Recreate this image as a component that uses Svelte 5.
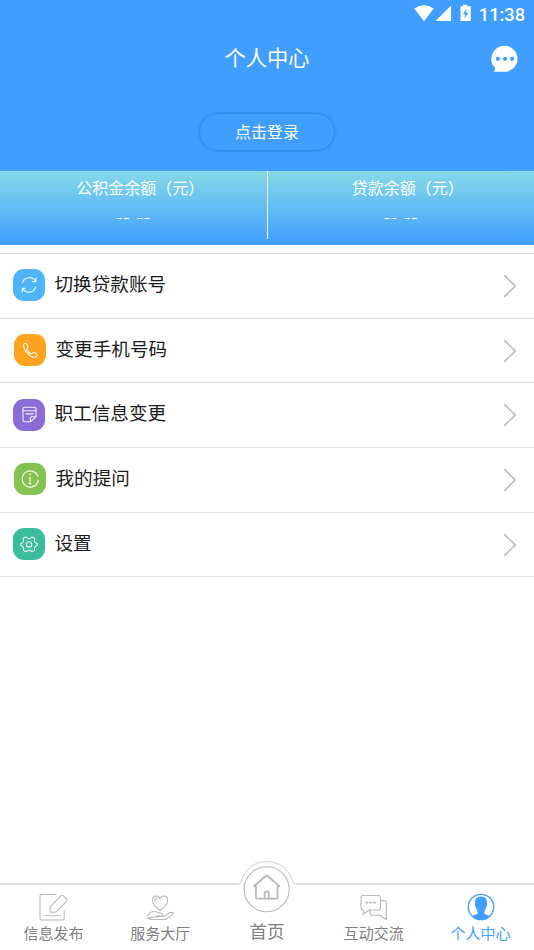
<script lang="ts">
    type MenuItem = { icon: string; label: string; color: string; offset: number };

    const stats = [
        { label: '公积金余额（元）', value: '-- --' },
        { label: '贷款余额（元）', value: '-- --' }
    ];

    const menu: MenuItem[] = [
        { icon: 'refresh', label: '切换贷款账号', color: '#4fb5fb', offset: 13 },
        { icon: 'phone', label: '变更手机号码', color: '#ffa320', offset: 14 },
        { icon: 'note', label: '职工信息变更', color: '#8b6cd6', offset: 13 },
        { icon: 'info', label: '我的提问', color: '#84c251', offset: 14 },
        { icon: 'gear', label: '设置', color: '#3bbd9c', offset: 13 }
    ];

    const tabs = [
        { id: 'news', label: '信息发布' },
        { id: 'service', label: '服务大厅' },
        { id: 'home', label: '首页' },
        { id: 'chat', label: '互动交流' },
        { id: 'mine', label: '个人中心' }
    ];

    let active = $state('mine');
</script>

<div class="page">
    <header class="hero">
        <div class="status-bar">
            <svg class="signals" width="58" height="18" viewBox="0 0 58 18">
                <path d="M0.3 4.6Q10-2.2 19.7 4.6L10 17.3Z" />
                <path d="M37 1.5V17H21.5Z" />
                <path d="M46.5 2.3H49V0.8H53.2V2.3H56.8V17H46.5Z" />
                <path class="bolt" d="M53 4.5L48.7 10.2H51.3L50 15L54.4 8.8H51.9Z" />
            </svg>
            <span class="clock">11:38</span>
        </div>

        <div class="title-bar">
            <h1>个人中心</h1>
            <button class="message" aria-label="消息">
                <svg width="28" height="28" viewBox="0 0 28 28">
                    <path d="M14 0.8A13 13 0 1 1 13 26.8H2.3C4 25.5 4.3 24.5 3.9 22.6A13 13 0 0 1 14 0.8Z" />
                    <circle class="dot" cx="6.9" cy="13.8" r="2.1" />
                    <circle class="dot" cx="14" cy="13.8" r="2.1" />
                    <circle class="dot" cx="21.1" cy="13.8" r="2.1" />
                </svg>
            </button>
        </div>

        <button class="login">点击登录</button>
    </header>

    <section class="stats">
        {#each stats as stat}
            <div class="stat">
                <span class="stat-label">{stat.label}</span>
                <span class="stat-value">{stat.value}</span>
            </div>
        {/each}
    </section>

    <ul class="menu">
        {#each menu as item}
            <li>
                <span class="tile" style="background-color: {item.color}; margin-left: {item.offset}px">
                    <svg width="32" height="32" viewBox="0 0 32 32">
                        {#if item.icon === 'refresh'}
                            <path d="M9.4 14.2A7 7 0 0 1 22.3 12.2M22.9 8.6V12.6H19.2M22.8 17.6A7 7 0 0 1 9.8 19.6M9.3 23.2V19.2H12.8" />
                        {:else if item.icon === 'phone'}
                            <path d="M9.4 11.2C9.4 9.8 11 9 12 9.3C13 9.8 14.1 12 14 13C13.9 14 12.5 14 12.7 15C13.2 17 15.2 19 17.2 19.8C18.2 20.1 18.6 18.7 19.6 18.5C20.8 18.4 23 20 23.3 21C23.5 22.1 22 23.4 20.7 23.3C15.5 22.8 9.3 16.5 9.4 11.2Z" />
                        {:else if item.icon === 'note'}
                            <path d="M17.4 22.8H11.5Q10 22.8 10 21.3V9.6Q10 8.3 11.5 8.3H21.5Q23 8.3 23 9.6V17.8ZM17.4 22.8V18.8Q17.4 17.8 18.4 17.8H23M10.5 11.7H22.5M12.6 14.9H20.5" />
                        {:else if item.icon === 'info'}
                            <path d="M24 13.6A8.1 8.1 0 1 0 23.8 19L24.5 17M16 14.3V20.8M14.8 14.3H16M14.5 20.8H17.5" />
                            <circle class="fill" cx="16" cy="11.3" r="0.9" />
                        {:else}
                            <path d="M13 8.9L15 10.6H17L19 8.9L21.6 10.3L21.4 13L22.4 14.6L24.2 15.8V17.2L22.4 18.4L21.4 20L21.6 22.3L19 23.7L17 22.2H15L13 23.7L10.4 22.3L10.6 20L9.6 18.4L7.8 17.2V15.8L9.6 14.6L10.6 13L10.4 10.3Z" />
                            <circle cx="16" cy="16.4" r="2.7" />
                        {/if}
                    </svg>
                </span>
                <span class="menu-label">{item.label}</span>
                <svg class="chevron" width="14" height="24" viewBox="0 0 14 24">
                    <path d="M1.2 1.2L12.2 12L1.2 22.8" />
                </svg>
            </li>
        {/each}
    </ul>

    <nav class="tabs">
        {#each tabs as tab}
            <button
                class="tab"
                class:home={tab.id === 'home'}
                class:active={tab.id === active}
                onclick={() => (active = tab.id)}
            >
                {#if tab.id === 'news'}
                    <svg width="32" height="30" viewBox="0 0 32 30">
                        <path d="M18.7 2.5H4.5Q3 2.5 3 4V26.5Q3 28 4.5 28H25.7Q27.2 28 27.2 26.5V19M7 23.7H23.7" />
                        <path d="M13.1 14.8L24.2 3.6Q25.3 2.9 26.4 3.8L29.5 6.8Q30.7 8 29.5 9.3L18.8 20.1H13.1Z" />
                    </svg>
                {:else if tab.id === 'service'}
                    <svg width="30" height="30" viewBox="0 0 30 30">
                        <path d="M15 18.5C11 15.5 7.5 12 7.5 8.5C7.5 3.5 13.3 2.4 15 6.8C16.8 2.4 22.6 3.5 22.6 8.5C22.6 12 19 15.5 15 18.5ZM10 9Q10 6 12.3 6" />
                        <path d="M2 24C3.5 23.6 4 20 8 19.5C11.5 19 13.5 21.3 16 21.3C18.5 21.4 18.7 24 16.2 24.1H11.5M17.5 24.3C21.2 24 22.7 21.3 25 20.6C27 20.1 28.7 20.8 28.2 21.6C25 24.2 22.7 27.4 19 27.5H7.5Q5.5 27.5 2 26Z" />
                    </svg>
                {:else if tab.id === 'home'}
                    <svg width="60" height="54" viewBox="0 0 60 54">
                        <path class="bump" d="M0 24H1Q3.5 24 5 19A26.6 26.6 0 0 1 55 19Q56.5 24 59 24H60V54H0Z" />
                        <path class="line" d="M0 24H1Q3.5 24 5 19A26.6 26.6 0 0 1 55 19Q56.5 24 59 24H60" />
                        <circle cx="29.7" cy="29.2" r="22.5" />
                        <path class="house" d="M17 26.2L29 15.8Q29.7 15.2 30.4 15.8L42.4 26.2M18.9 24.7V37Q18.9 38.6 20.5 38.6H38.9Q40.5 38.6 40.5 37V24.7M27.6 38.5V33Q27.6 31.3 29.7 31.3Q31.8 31.3 31.8 33V38.5" />
                    </svg>
                {:else if tab.id === 'chat'}
                    <svg width="30" height="30" viewBox="0 0 30 30">
                        <path d="M4 3.5H19.5Q21.5 3.5 21.5 5.5V16Q21.5 18 19.5 18H10.5L4.2 22.3V18Q2 18 2 16V5.5Q2 3.5 4 3.5Z" />
                        <path d="M21.5 8.6H25.8Q27.4 8.6 27.4 10.5V27.7L21 23.2H13Q11 23.2 11 21V18" />
                        <path class="dots" d="M6.8 10.6H8.4M10.9 10.6H12.5M15 10.6H16.6" />
                    </svg>
                {:else}
                    <svg width="30" height="30" viewBox="0 0 30 30">
                        <circle cx="15" cy="15" r="12.7" />
                        <path class="fill" d="M15 4.5C19.3 4.5 21 7.3 21 11C21.6 13.5 20.5 15.6 19.6 16.5C19 19 18 19.5 18.2 21.3C19 22.8 21.5 22.7 23.5 24.1Q20 28 15 28T6.5 24.1C8.5 22.7 11 22.8 11.8 21.3C12 19.5 11 19 10.4 16.5C9.5 15.6 8.4 13.5 9 11C9 7.3 10.7 4.5 15 4.5Z" />
                    </svg>
                {/if}
                <span>{tab.label}</span>
            </button>
        {/each}
    </nav>
</div>

<style>
    :global(body) {
        background: #fff;
    }

    .page {
        display: flex;
        flex-direction: column;
        height: 950px;
        font-family: 'Noto Sans CJK SC', sans-serif;
        overflow: hidden;
    }

    button {
        padding: 0;
        border: none;
        background: none;
        font-family: inherit;
    }

    svg {
        display: block;
        flex: none;
    }

    .hero {
        display: flex;
        flex-direction: column;
        align-items: center;
        height: 171px;
        flex: none;
        background: #409eff;
        color: #fff;
    }

    .status-bar {
        display: flex;
        align-self: stretch;
        justify-content: flex-end;
        align-items: center;
        gap: 7px;
        height: 27px;
        padding-right: 9px;
        box-sizing: border-box;
    }

    .signals {
        fill: #fff;
        margin-bottom: 2px;
    }

    .bolt,
    .dot {
        fill: #409eff;
    }

    .clock {
        padding-top: 1px;
        font: 500 18.2px/27px Roboto, sans-serif;
    }

    .title-bar {
        display: grid;
        grid-template-columns: 1fr auto 1fr;
        align-items: center;
        align-self: stretch;
        height: 62px;
        padding: 0 15px;
    }

    h1 {
        grid-column: 2;
        margin: 0;
        padding-bottom: 2px;
        font-size: 21.3px;
        font-weight: 400;
        line-height: 30px;
    }

    .message {
        justify-self: end;
        margin-top: 2px;
        fill: #fff;
    }

    .login {
        width: 134px;
        height: 36px;
        margin-top: 25px;
        padding-bottom: 2px;
        border-radius: 18px;
        box-shadow: 0 0 3px 1px #2f84e2;
        color: #fff;
        font-size: 16px;
        line-height: 34px;
    }

    .stats {
        display: flex;
        flex: none;
        height: 74px;
        background: linear-gradient(#86d9e8, #409eff);
        color: #fff;
    }

    .stat {
        display: flex;
        flex: 1;
        flex-direction: column;
        align-items: center;
        height: 68px;
        box-sizing: border-box;
    }

    .stat + .stat {
        border-left: 1px solid #fff;
    }

    .stat-label {
        padding-left: 14px;
        font-size: 16px;
        line-height: 32px;
    }

    .stat-value {
        font-size: 20px;
        font-weight: 300;
        line-height: 26px;
        word-spacing: 2px;
        letter-spacing: 0.3px;
    }

    .menu {
        flex: 1;
        margin: 8px 0 0;
        padding: 0;
        list-style: none;
        border-top: 1px solid #e2dcda;
    }

    .menu li {
        display: flex;
        align-items: center;
        height: 64.7px;
        box-sizing: border-box;
        border-bottom: 1px solid #dcdcdc;
    }

    .tile {
        width: 32px;
        height: 32px;
        margin-top: -1px;
        border-radius: 11px;
    }

    .tile svg {
        fill: none;
        stroke: #fff;
        stroke-width: 1.1;
        stroke-linejoin: round;
        opacity: 0.9;
    }

    .tile .fill {
        fill: #fff;
        stroke: none;
    }

    .menu-label {
        margin: -6px auto 0 0;
        padding-left: 9.5px;
        color: #1c1c1c;
        font-size: 18.6px;
        line-height: 28px;
    }

    .chevron {
        margin-right: 17px;
        fill: none;
        stroke: #bcbcbc;
        stroke-width: 1.7;
    }

    .tabs {
        display: flex;
        flex: none;
        height: 67px;
        box-sizing: border-box;
        border-top: 2px solid #dedede;
    }

    .tab {
        display: flex;
        flex: 1;
        flex-direction: column;
        align-items: center;
        padding-top: 7px;
        color: #808080;
        font-size: 15px;
        line-height: 22px;
    }

    .tab svg {
        fill: none;
        stroke: #b8b8b8;
        stroke-width: 1.1;
        stroke-linejoin: round;
        stroke-linecap: round;
    }

    .tab.home {
        padding-top: 0;
        font-size: 17.5px;
        line-height: 34px;
    }

    /* the round home button sticks out above the bar */
    .tab.home svg {
        margin-top: -25px;
    }

    .home .bump {
        fill: #fff;
        stroke: none;
    }

    .home .line {
        stroke: #dedede;
        stroke-width: 1.4;
    }

    .tab .dots {
        stroke-width: 1.6;
    }

    .home .house {
        stroke-width: 1.8;
    }

    .tab.active {
        color: #409eff;
    }

    .tab.active svg {
        stroke: #409eff;
        stroke-width: 1.3;
    }

    .tab .fill {
        fill: #409eff;
        stroke: none;
    }
</style>
